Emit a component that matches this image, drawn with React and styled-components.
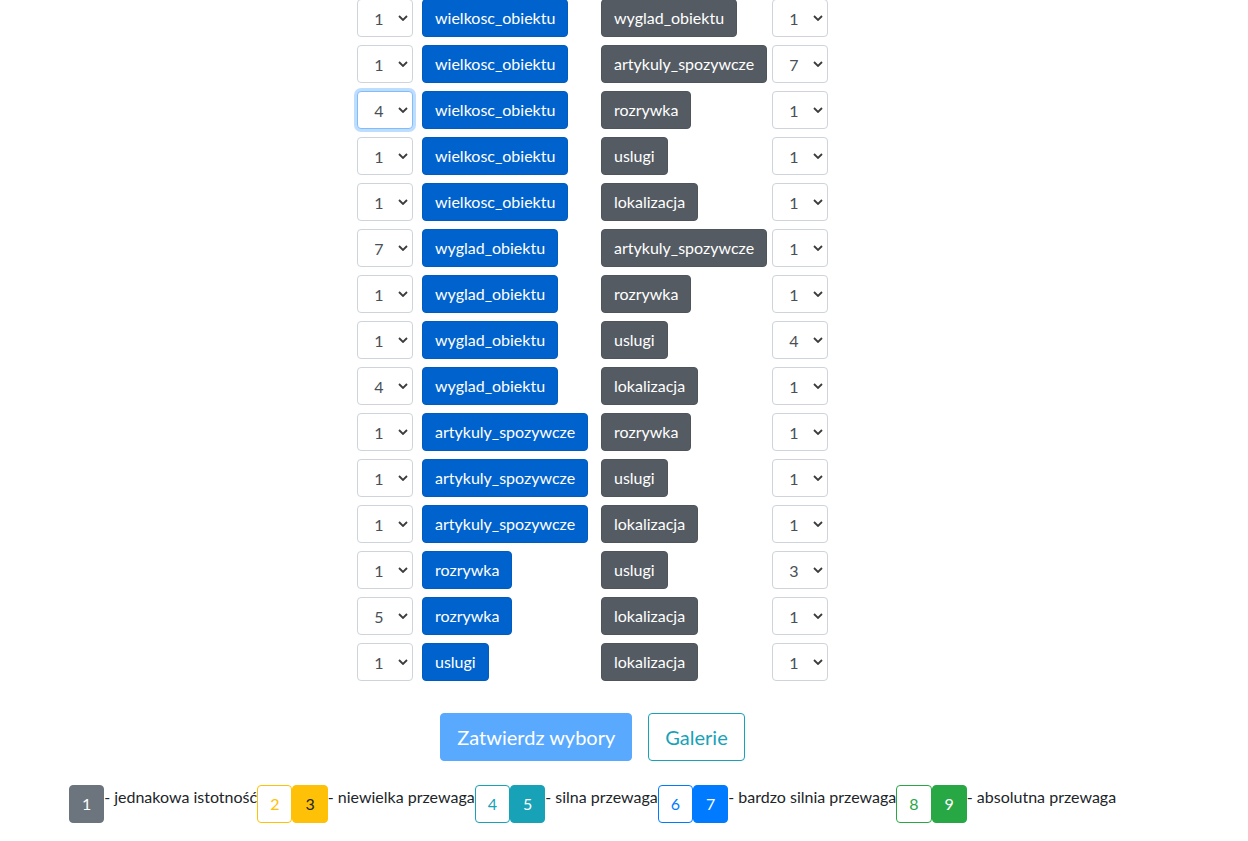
import React from "react";
import styled, { createGlobalStyle, css } from "styled-components";

const GlobalStyle = createGlobalStyle`
  body {
    margin: 0;
    background: #fff;
    font-family: Lato, "Noto Sans", "Liberation Sans", sans-serif;
    color: #212529;
  }
`;

const rows = [
  [1, "wielkosc_obiektu", "wyglad_obiektu", 1],
  [1, "wielkosc_obiektu", "artykuly_spozywcze", 7],
  [4, "wielkosc_obiektu", "rozrywka", 1],
  [1, "wielkosc_obiektu", "uslugi", 1],
  [1, "wielkosc_obiektu", "lokalizacja", 1],
  [7, "wyglad_obiektu", "artykuly_spozywcze", 1],
  [1, "wyglad_obiektu", "rozrywka", 1],
  [1, "wyglad_obiektu", "uslugi", 4],
  [4, "wyglad_obiektu", "lokalizacja", 1],
  [1, "artykuly_spozywcze", "rozrywka", 1],
  [1, "artykuly_spozywcze", "uslugi", 1],
  [1, "artykuly_spozywcze", "lokalizacja", 1],
  [1, "rozrywka", "uslugi", 3],
  [5, "rozrywka", "lokalizacja", 1],
  [1, "uslugi", "lokalizacja", 1],
];

const legend = [
  { items: [["1", "grey"]], text: "- jednakowa istotność" },
  { items: [["2", "warnOutline"], ["3", "warn"]], text: "- niewielka przewaga" },
  { items: [["4", "infoOutline"], ["5", "info"]], text: "- silna przewaga" },
  { items: [["6", "primOutline"], ["7", "prim"]], text: "- bardzo silnia przewaga" },
  { items: [["8", "succOutline"], ["9", "succ"]], text: "- absolutna przewaga" },
];

const variants = {
  blue: css`background: #0062cc; border-color: #005cbf; color: #fff;`,
  dark: css`background: #545b62; border-color: #4e555b; color: #fff;`,
  grey: css`background: #6c757d; border-color: #6c757d; color: #fff;`,
  warn: css`background: #ffc107; border-color: #ffc107; color: #212529;`,
  warnOutline: css`background: #fff; border-color: #ffc107; color: #ffc107;`,
  info: css`background: #17a2b8; border-color: #17a2b8; color: #fff;`,
  infoOutline: css`background: #fff; border-color: #17a2b8; color: #17a2b8;`,
  prim: css`background: #007bff; border-color: #007bff; color: #fff;`,
  primOutline: css`background: #fff; border-color: #007bff; color: #007bff;`,
  succ: css`background: #28a745; border-color: #28a745; color: #fff;`,
  succOutline: css`background: #fff; border-color: #28a745; color: #28a745;`,
  disabled: css`background: #59a9ff; border-color: #59a9ff; color: #fff;`,
};

const Main = styled.div`
  width: 1185px;
  margin-top: -1px;
  display: flex;
  flex-direction: column;
  align-items: center;
`;

const Table = styled.div`
  display: grid;
  grid-template-columns: 65px 179px 171px 56px;
  row-gap: 8px;
  width: 471px;
`;

const SelectBox = styled.div`
  position: relative;
  width: 56px;
  height: 38px;
  svg {
    position: absolute;
    right: 5px;
    top: 16px;
    pointer-events: none;
  }
`;

const Select = styled.select`
  appearance: none;
  width: 56px;
  height: 38px;
  box-sizing: border-box;
  padding: 0 24px 0 12px;
  border: 1px solid ${(p) => (p.$focus ? "#80bdff" : "#ced4da")};
  box-shadow: ${(p) => (p.$focus ? "0 0 0 3px rgba(0,123,255,.25)" : "none")};
  border-radius: 4px;
  background: #fff;
  font: inherit;
  font-size: 16px;
  color: #495057;
  text-align: center;
  text-align-last: center;
  outline: none;
`;

const Btn = styled.button`
  justify-self: start;
  box-sizing: border-box;
  height: ${(p) => (p.$lg ? "48px" : "38px")};
  padding: ${(p) => (p.$lg ? "0 16px" : "0 12px")};
  border: 1px solid transparent;
  border-radius: 4px;
  font-family: inherit;
  font-size: ${(p) => (p.$lg ? "20px" : "16px")};
  line-height: 1.5;
  white-space: nowrap;
  ${(p) => variants[p.$v]}
`;

const Actions = styled.div`
  display: flex;
  gap: 16px;
  margin-top: 32px;
`;

const Legend = styled.div`
  display: flex;
  align-items: flex-start;
  margin-top: 24px;
  font-size: 16px;
  line-height: 24px;
`;

const Chevron = () => (
  <svg width="10" height="6" viewBox="0 0 10 6">
    <path d="M1 1l4 4 4-4" fill="none" stroke="#3c3c3c" strokeWidth="1.8" />
  </svg>
);

const NumSelect = ({ value, focus }) => (
  <SelectBox>
    <Select defaultValue={value} $focus={focus}>
      {[1, 2, 3, 4, 5, 6, 7, 8, 9].map((n) => (
        <option key={n} value={n}>
          {n}
        </option>
      ))}
    </Select>
    <Chevron />
  </SelectBox>
);

const App = () => {
  return (
    <>
      <GlobalStyle />
      <Main>
        <Table>
          {rows.map((row, i) => (
            <React.Fragment key={i}>
              <NumSelect value={row[0]} focus={i === 2} />
              <Btn $v="blue">{row[1]}</Btn>
              <Btn $v="dark">{row[2]}</Btn>
              <NumSelect value={row[3]} />
            </React.Fragment>
          ))}
        </Table>
        <Actions>
          <Btn $lg $v="disabled">Zatwierdz wybory</Btn>
          <Btn $lg $v="infoOutline">Galerie</Btn>
        </Actions>
        <Legend>
          {legend.map((group, i) => (
            <React.Fragment key={i}>
              {group.items.map(([n, v]) => (
                <Btn key={n} $v={v}>
                  {n}
                </Btn>
              ))}
              <span>{group.text}</span>
            </React.Fragment>
          ))}
        </Legend>
      </Main>
    </>
  );
};

export default App;
